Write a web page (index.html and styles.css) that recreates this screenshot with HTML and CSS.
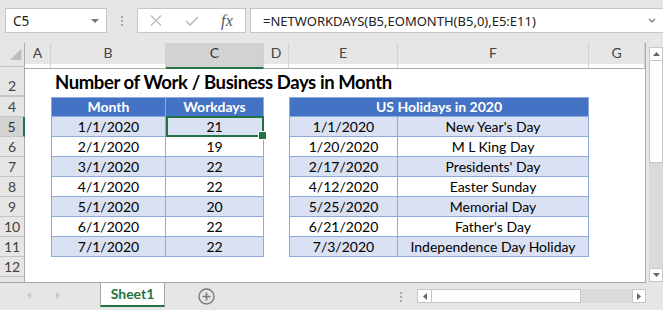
FILE: index.html
```html
<!DOCTYPE html>
<html lang="en">
<head>
    <meta charset="UTF-8">
    <title>Number of Work / Business Days in Month</title>
    <link rel="stylesheet" href="styles.css">
</head>
<body>
    <div class="fbar">
        <div class="namebox"><span>C5</span><span class="caret"></span></div>
        <div class="grip"><i></i><i></i><i></i></div>
        <div class="fbtns">
            <span class="slot">
                <svg width="12" height="11" viewBox="0 0 12 11"><path d="M1 0.5L11 10.5M11 0.5L1 10.5" stroke="#bcbcbc" stroke-width="1.3" fill="none"/></svg>
            </span>
            <span class="slot">
                <svg width="14" height="10" viewBox="0 0 14 10"><path d="M1 5L5 9L13 1" stroke="#bcbcbc" stroke-width="1.6" fill="none"/></svg>
            </span>
            <span class="slot fx">fx</span>
        </div>
        <div class="finput">
            <span>=NETWORKDAYS(B5,EOMONTH(B5,0),E5:E11)</span>
            <svg width="8" height="5" viewBox="0 0 8 5"><path d="M1 1L4 4L7 1" stroke="#777" stroke-width="1.2" fill="none"/></svg>
        </div>
    </div>

    <div class="sheet">
        <div class="grid">
            <div class="row colheads">
                <div class="corner">
                    <svg width="25" height="20" viewBox="0 0 25 20"><polygon points="10,17 21.5,5.5 21.5,17" fill="#bdbdbd"/></svg>
                </div>
                <div>A</div><div>B</div><div class="sel">C</div><div>D</div><div>E</div><div>F</div><div>G</div>
            </div>

            <div class="row hidden1"><div class="rh"></div></div>
            <div class="row tall">
                <div class="rh">2</div><div></div>
                <div class="title">Number of Work / Business Days in Month</div>
            </div>
            <div class="row hidden3"><div class="rh"></div></div>

            <div class="row">
                <div class="rh">4</div><div></div>
                <div class="c hd first top">Month</div>
                <div class="c hd top">Workdays</div>
                <div></div>
                <div class="c hd first top wide">US Holidays in 2020</div>
            </div>
            <div class="row alt">
                <div class="rh sel">5</div><div></div>
                <div class="c first">1/1/2020</div>
                <div class="c active">21</div>
                <div></div>
                <div class="c first">1/1/2020</div>
                <div class="c">New Year's Day</div>
            </div>
            <div class="row">
                <div class="rh">6</div><div></div>
                <div class="c first">2/1/2020</div>
                <div class="c">19</div>
                <div></div>
                <div class="c first">1/20/2020</div>
                <div class="c">M L King Day</div>
            </div>
            <div class="row alt">
                <div class="rh">7</div><div></div>
                <div class="c first">3/1/2020</div>
                <div class="c">22</div>
                <div></div>
                <div class="c first">2/17/2020</div>
                <div class="c">Presidents' Day</div>
            </div>
            <div class="row">
                <div class="rh">8</div><div></div>
                <div class="c first">4/1/2020</div>
                <div class="c">22</div>
                <div></div>
                <div class="c first">4/12/2020</div>
                <div class="c">Easter Sunday</div>
            </div>
            <div class="row alt">
                <div class="rh">9</div><div></div>
                <div class="c first">5/1/2020</div>
                <div class="c">20</div>
                <div></div>
                <div class="c first">5/25/2020</div>
                <div class="c">Memorial Day</div>
            </div>
            <div class="row">
                <div class="rh">10</div><div></div>
                <div class="c first">6/1/2020</div>
                <div class="c">22</div>
                <div></div>
                <div class="c first">6/21/2020</div>
                <div class="c">Father's Day</div>
            </div>
            <div class="row alt">
                <div class="rh">11</div><div></div>
                <div class="c first">7/1/2020</div>
                <div class="c">22</div>
                <div></div>
                <div class="c first">7/3/2020</div>
                <div class="c">Independence Day Holiday</div>
            </div>
            <div class="row"><div class="rh">12</div></div>
            <div class="row stub"><div class="rh"></div></div>
        </div>

        <div class="vscroll">
            <div class="vbtn"><svg width="7" height="4" viewBox="0 0 7 4"><polygon points="0,4 3.5,0 7,4" fill="#666"/></svg></div>
            <div class="vthumb"></div>
            <div class="vtrack"></div>
            <div class="vbtn"><svg width="7" height="4" viewBox="0 0 7 4"><polygon points="0,0 3.5,4 7,0" fill="#666"/></svg></div>
        </div>
    </div>

    <div class="tabs">
        <div class="nav">
            <svg width="4" height="7" viewBox="0 0 4 7"><polygon points="4,0 0,3.5 4,7" fill="#c8c8c8"/></svg>
            <svg width="4" height="7" viewBox="0 0 4 7"><polygon points="0,0 4,3.5 0,7" fill="#c8c8c8"/></svg>
        </div>
        <div class="tab">Sheet1</div>
        <div class="add">
            <svg width="17" height="17" viewBox="0 0 17 17"><circle cx="8.5" cy="8.5" r="7.5" stroke="#7a7a7a" stroke-width="1.4" fill="none"/><path d="M8.5 4.5V12.5M4.5 8.5H12.5" stroke="#7a7a7a" stroke-width="1.6"/></svg>
        </div>
        <div class="hgrip"><i></i><i></i><i></i></div>
        <div class="hscroll">
            <div class="hbtn"><svg width="4" height="7" viewBox="0 0 4 7"><polygon points="4,0 0,3.5 4,7" fill="#666"/></svg></div>
            <div class="hthumb"></div>
            <div class="htrack"></div>
            <div class="hbtn"><svg width="4" height="7" viewBox="0 0 4 7"><polygon points="0,0 4,3.5 0,7" fill="#666"/></svg></div>
        </div>
    </div>
</body>
</html>
```

FILE: styles.css
```css
* {
    box-sizing: border-box;
}

body {
    margin: 0;
    width: 663px;
    height: 310px;
    overflow: hidden;
    background-color: #e6e6e6;
    font-family: Lato, "Liberation Sans", sans-serif;
    color: #000;
}

/* formula bar */
.fbar {
    height: 43px;
    display: flex;
    align-items: flex-start;
    padding: 8px 0 0 5px;
}

.namebox {
    width: 102px;
    height: 25px;
    background-color: #fff;
    border: 1px solid #c6c6c6;
    display: flex;
    align-items: center;
    justify-content: space-between;
    padding: 0 7px 0 7px;
    font-family: "Noto Sans", sans-serif;
    font-size: 13.5px;
    color: #222;
}

.caret {
    width: 0;
    height: 0;
    border-left: 4px solid transparent;
    border-right: 4px solid transparent;
    border-top: 4px solid #777;
}

.grip, .hgrip {
    display: flex;
    flex-direction: column;
    align-items: center;
    justify-content: center;
    gap: 2px;
}

.grip {
    width: 30px;
    height: 25px;
}

.grip i, .hgrip i {
    width: 2px;
    height: 2px;
    background-color: #a8a8a8;
}

.fbtns {
    width: 109px;
    height: 25px;
    background-color: #fff;
    border: 1px solid #c6c6c6;
    display: flex;
    align-items: center;
}

.slot {
    width: 36px;
    display: flex;
    justify-content: center;
}

.fx {
    font-family: "Liberation Serif", serif;
    font-style: italic;
    font-size: 16px;
    color: #555;
    letter-spacing: 0.5px;
}

.finput {
    flex: 1;
    margin-left: 4px;
    height: 25px;
    background-color: #fff;
    border: 1px solid #c6c6c6;
    border-right: none;
    display: flex;
    align-items: center;
    justify-content: space-between;
    padding: 0 7px 0 12px;
    font-family: "Noto Sans", sans-serif;
    font-size: 13px;
    color: #222;
}

/* sheet grid */
.sheet {
    display: flex;
    height: 240px;
}

.grid {
    width: 646px;
    background-color: #fff;
    border-right: 1px solid #ababab;
    border-bottom: 1px solid #a6a6a6;
}

.row {
    display: grid;
    grid-template-columns: 25px 26px 115px 98px 25px 109px 191px 56px;
    height: 20px;
}

.colheads {
    height: 21px;
    background-color: #e6e6e6;
}

.colheads div {
    border-right: 1px solid #d0d0d0;
    border-bottom: 1px solid #ababab;
    text-align: center;
    font-size: 14px;
    line-height: 20px;
    color: #444;
}

.colheads .corner {
    border-right-color: #ababab;
}

.colheads .sel {
    background-color: #d2d2d2;
    border-bottom: 2px solid #217346;
    color: #333;
}

.hidden1 {
    height: 3px;
}

.tall {
    height: 29px;
}

.hidden3 {
    height: 1px;
}

.stub {
    height: 5px;
}

.rh {
    background-color: #e6e6e6;
    border-right: 1px solid #ababab;
    border-bottom: 1px solid #c6c6c6;
    display: flex;
    align-items: flex-end;
    justify-content: center;
    font-size: 14px;
    line-height: 18px;
    color: #444;
}

.stub .rh {
    border-bottom: none;
}

.rh.sel {
    background-color: #d2d2d2;
    border-right: 2px solid #217346;
    color: #333;
}

.title {
    grid-column: 3 / -1;
    display: flex;
    align-items: flex-end;
    padding: 0 0 2px 4px;
    font-size: 18.5px;
    font-weight: bold;
    letter-spacing: -0.4px;
    line-height: 24px;
}

/* tables */
.c {
    display: flex;
    align-items: flex-end;
    justify-content: center;
    font-size: 14px;
    line-height: 18px;
    white-space: nowrap;
    border-right: 1px solid #8ea9db;
    border-bottom: 1px solid #8ea9db;
}

.c.first {
    border-left: 1px solid #8ea9db;
}

.c.top {
    border-top: 1px solid #8ea9db;
}

.c.wide {
    grid-column: 6 / 8;
}

.c.hd {
    background-color: #4472c4;
    color: #fff;
    font-weight: bold;
}

.alt .c {
    background-color: #d9e1f2;
}

.c.active {
    position: relative;
}

.c.active::after {
    content: '';
    position: absolute;
    top: -1px;
    left: 0;
    right: -1px;
    bottom: -1px;
    border: 2px solid #217346;
}

.c.active::before {
    content: '';
    position: absolute;
    right: -4px;
    bottom: -4px;
    width: 7px;
    height: 7px;
    background-color: #217346;
    border: 1px solid #fff;
    z-index: 1;
}

/* vertical scrollbar */
.vscroll {
    width: 17px;
    padding: 4px 0 0 3px;
    display: flex;
    flex-direction: column;
}

.vbtn {
    height: 14px;
    background-color: #fff;
    border: 1px solid #c6c6c6;
    display: flex;
    align-items: center;
    justify-content: center;
}

.vthumb {
    height: 102px;
    background-color: #fff;
    border: 1px solid #c6c6c6;
    border-top: none;
}

.vtrack {
    height: 105px;
    background-color: #dadada;
}

/* sheet tabs */
.tabs {
    height: 27px;
    display: flex;
    align-items: flex-start;
}

.nav {
    width: 100px;
    display: flex;
    gap: 25px;
    padding: 9px 0 0 27px;
}

.tab {
    width: 65px;
    height: 24px;
    background-color: #fff;
    border-left: 1px solid #a6a6a6;
    border-right: 1px solid #a6a6a6;
    border-bottom: 2px solid #217346;
    text-align: center;
    font-size: 14px;
    font-weight: bold;
    line-height: 21px;
    color: #217346;
}

.add {
    margin: 5px 0 0 33px;
    height: 17px;
}

.hgrip {
    margin-left: auto;
    width: 33px;
    height: 27px;
}

.hscroll {
    width: 229px;
    height: 14px;
    margin-top: 6px;
    display: flex;
}

.hbtn {
    width: 15px;
    background-color: #fff;
    border: 1px solid #c6c6c6;
    display: flex;
    align-items: center;
    justify-content: center;
}

.hthumb {
    width: 149px;
    background-color: #fff;
    border: 1px solid #c6c6c6;
    border-left: none;
}

.htrack {
    flex: 1;
    background-color: #dadada;
}

.hscroll .hbtn:last-child {
    width: 14px;
}

.tabs::after {
    content: '';
    width: 17px;
}
```
